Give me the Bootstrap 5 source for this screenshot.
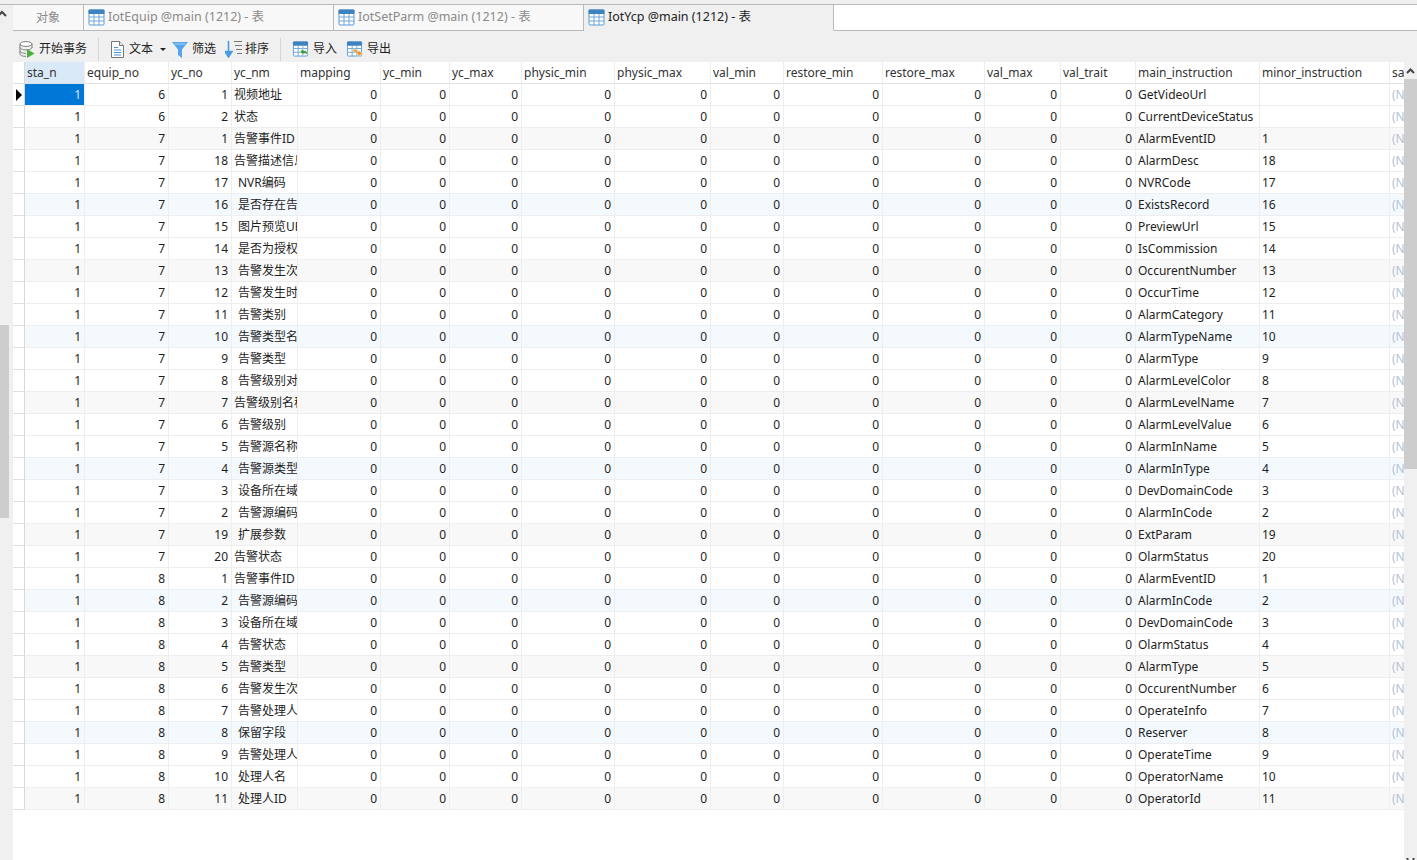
<!DOCTYPE html>
<html lang="zh">
<head>
  <meta charset="UTF-8">
  <meta name="viewport" content="width=device-width, initial-scale=1.0">
  <title>IotYcp @main (1212) - 表</title>
  <link href="https://cdn.jsdelivr.net/npm/bootstrap@5.3.0/dist/css/bootstrap.min.css" rel="stylesheet">
  <style>
    html, body {
      height: 100%;
      background: #f0f0f0;
      overflow: hidden;
    }
    body {
      font-family: "Noto Sans", "Noto Sans CJK SC", sans-serif;
      font-size: 12px;
      color: #1e1e1e;
    }
    .app-shell {
      height: 856px;
      margin-top: 4px;
      border-top: 1px solid #b9b9b9;
    }
    .main-col {
      min-width: 0;
    }
    .side-strip {
      width: 13px;
      flex: none;
    }
    .side-strip .chev {
      display: block;
      margin: 5px 0 0 -3px;
    }
    .side-thumb {
      width: 9px;
      height: 193px;
      margin-top: 308px;
      background: #cdcdcd;
    }
    .tab-row {
      height: 26px;
      flex: none;
    }
    .obj-tab, .file-tab {
      height: 26px;
      border-right: 1px solid #b9b9b9;
      border-bottom: 1px solid #b9b9b9;
      background: #f8f8f8;
      color: #8a8a8a;
    }
    .obj-tab {
      width: 71px;
      justify-content: center;
    }
    .file-tab {
      width: 250px;
      padding-left: 4px;
      gap: 3px;
      font-size: 12.5px;
    }
    .file-tab.on {
      background: #f0f0f0;
      border-bottom-color: #f0f0f0;
      color: #222;
    }
    .tab-rest {
      background: #fff;
      border-bottom: 1px solid #b9b9b9;
    }
    .tool-row {
      height: 31px;
      flex: none;
      padding: 5px 0 0 6px;
    }
    .tool-btn {
      padding: 0;
      border: 0;
      border-radius: 0;
      font-size: 12px;
      color: #1e1e1e;
      gap: 4px;
    }
    .tool-btn.tight {
      gap: 3px;
    }
    .tool-sep {
      width: 1px;
      height: 23px;
      background: #d6d6d6;
      margin: 0 11px;
    }
    .drop-arrow {
      width: 0;
      height: 0;
      margin: 0 6px 0 7px;
      border-left: 3px solid transparent;
      border-right: 3px solid transparent;
      border-top: 3px solid #222;
    }
    .gap-after {
      margin-right: 9px;
    }
    .grid-wrap {
      min-height: 0;
    }
    .grid-view {
      background: #fff;
      overflow: hidden;
      min-width: 0;
    }
    table.data-grid {
      width: 1411px;
      table-layout: fixed;
      border-collapse: separate;
      border-spacing: 0;
      margin: 0;
    }
    table.data-grid th, table.data-grid td {
      height: 22px;
      padding: 0 3px 0 2px;
      border-right: 1px solid #eeeeee;
      border-bottom: 1px solid #eeeeee;
      font-weight: 400;
      white-space: nowrap;
      overflow: hidden;
      line-height: 20px;
      background: transparent;
      color: #1e1e1e;
    }
    table.data-grid th {
      border-bottom-color: #e2e2e2;
      color: #333;
    }
    table.data-grid th.sel-head {
      background: #d9e9f7;
    }
    table.data-grid .mark-cell {
      padding: 0 0 0 3px;
      border-right: 1px solid #d8d8d8;
      border-bottom-color: #e0e0e0;
      background: #fff;
    }
    table.data-grid .num-cell {
      text-align: right;
    }
    table.data-grid .pad-cell {
      padding-left: 6px;
    }
    table.data-grid .null-cell {
      color: #b6c2d6;
    }
    table.data-grid tr.band-gray td {
      background: #f8f8f8;
    }
    table.data-grid tr.band-blue td {
      background: #f4f9fe;
    }
    table.data-grid tr td.mark-cell {
      background: #fff;
    }
    table.data-grid td.sel-cell {
      background: #0078d7;
      color: #d6e8f8;
    }
    .row-arrow {
      display: block;
      width: 0;
      height: 0;
      border-top: 6px solid transparent;
      border-bottom: 6px solid transparent;
      border-left: 6px solid #000;
    }
    .scroll-strip {
      width: 13px;
      flex: none;
    }
    .scroll-strip .chev {
      display: block;
      margin: 6px 0 0 2px;
    }
    .scroll-strip .chev-end {
      display: block;
      margin: auto 0 0 2px;
    }
    .scroll-thumb {
      height: 390px;
      margin-top: 5px;
      background: #cdcdcd;
    }
  </style>
</head>
<body>
  <div class="app-shell d-flex">
    <div class="side-strip">
      <svg class="chev" width="10" height="7" viewBox="0 0 10 7"><path d="M1 6 5 2l4 4" fill="none" stroke="#444" stroke-width="2"/></svg>
      <div class="side-thumb"></div>
    </div>

    <div class="main-col flex-grow-1 d-flex flex-column">
      <div class="tab-row d-flex">
        <div class="obj-tab d-flex align-items-center">对象</div>
        <div class="file-tab d-flex align-items-center"><svg width="17" height="17" viewBox="0 0 17 17"><use href="#ico-table"/></svg>IotEquip @main (1212) - 表</div>
        <div class="file-tab d-flex align-items-center"><svg width="17" height="17" viewBox="0 0 17 17"><use href="#ico-table"/></svg>IotSetParm @main (1212) - 表</div>
        <div class="file-tab on d-flex align-items-center"><svg width="17" height="17" viewBox="0 0 17 17"><use href="#ico-table"/></svg>IotYcp @main (1212) - 表</div>
        <div class="tab-rest flex-grow-1"></div>
      </div>

      <div class="tool-row d-flex align-items-center">
        <button class="btn tool-btn d-flex align-items-center">
          <svg width="16" height="17" viewBox="0 0 16 17">
            <ellipse cx="7" cy="3" rx="6" ry="2.400" fill="#fff" stroke="#7d7d7d"/>
            <path d="M1 3v10c0 1.400 2.700 2.400 6 2.400M13 3v4M1 6.500c0 1.400 2.700 2.400 6 2.400s6-1 6-2.400M1 10c0 1.400 2.700 2.400 6 2.400" fill="none" stroke="#7d7d7d"/>
            <path d="M8 8l7.500 4.500L8 17z" fill="#4caf3c"/>
          </svg>
          开始事务
        </button>
        <span class="tool-sep"></span>
        <button class="btn tool-btn d-flex align-items-center">
          <svg width="15" height="17" viewBox="0 0 15 17">
            <path d="M1.500.5h8l4 4v12h-12z" fill="#fff" stroke="#777"/>
            <path d="M9.500.5v4h4" fill="#eee" stroke="#777"/>
            <path d="M4 6.500h4M4 9h7M4 11.500h7M4 14h7" stroke="#3f92dc"/>
          </svg>
          文本
        </button>
        <span class="drop-arrow"></span>
        <button class="btn tool-btn d-flex align-items-center gap-after">
          <svg width="16" height="17" viewBox="0 0 16 17">
            <path d="M0 1h16l-6 7.500V17l-4-3V8.500z" fill="#56a5e8"/>
            <path d="M3 3h10" stroke="#a9d3f5"/>
          </svg>
          筛选
        </button>
        <button class="btn tool-btn tight d-flex align-items-center">
          <svg width="17" height="18" viewBox="0 0 17 18">
            <path d="M3.500 1v12M0 11.500l3.500 5.500 3.500-5.500z" fill="#4a9be0" stroke="#4a9be0" stroke-width="1.600"/>
            <path d="M9 1.500h8M10 5.500h7M11 9.500h6M12 13.500h5" stroke="#777"/>
          </svg>
          排序
        </button>
        <span class="tool-sep"></span>
        <button class="btn tool-btn d-flex align-items-center gap-after">
          <svg width="17" height="16" viewBox="0 0 17 16">
            <use href="#ico-table"/>
            <path d="M8 10.500l3.500-3v2c3 0 4.500 1.500 5 5-1-1.500-2.500-2-5-2v2z" fill="#3f9a45" stroke="#fff" stroke-width=".5"/>
          </svg>
          导入
        </button>
        <button class="btn tool-btn d-flex align-items-center">
          <svg width="17" height="16" viewBox="0 0 17 16">
            <use href="#ico-table"/>
            <path d="M7 8c3 0 4.500 1 5 3V9l4.500 3.500L12 16v-2.500c-1.500-2-3-3-5-3z" fill="#ec9420" stroke="#fff" stroke-width=".5"/>
          </svg>
          导出
        </button>
      </div>

      <div class="grid-wrap flex-grow-1 d-flex">
        <div class="grid-view flex-grow-1">
          <table class="data-grid" id="grid">
            <colgroup id="gridCols"></colgroup>
            <thead><tr id="gridHead"></tr></thead>
            <tbody id="gridBody"></tbody>
          </table>
        </div>
        <div class="scroll-strip d-flex flex-column">
          <svg class="chev" width="9" height="6" viewBox="0 0 9 6"><path d="M1 5 4.500 1.500 8 5" fill="none" stroke="#444" stroke-width="2"/></svg>
          <div class="scroll-thumb"></div>
          <svg class="chev-end" width="9" height="2" viewBox="0 0 9 2"><path d="M1 0l1 2M8 0 7 2" fill="none" stroke="#444" stroke-width="2"/></svg>
        </div>
      </div>
    </div>
  </div>

  <svg width="0" height="0" class="d-block">
    <symbol id="ico-table" viewBox="0 0 17 17">
      <rect x="1" y="1" width="15" height="15" rx="1" fill="#fff" stroke="#5b9bd5"/>
      <rect x=".5" y=".5" width="16" height="4.500" rx="1" fill="#3f82c0"/>
      <path d="M1 8h15M1 12h15M6 5v11M11 5v11" stroke="#6ea6da"/>
    </symbol>
  </svg>

  <script>
    const cols = [
      ['', 12], ['sta_n', 60], ['equip_no', 84], ['yc_no', 63], ['yc_nm', 66], ['mapping', 83],
      ['yc_min', 69], ['yc_max', 72], ['physic_min', 93], ['physic_max', 96], ['val_min', 73],
      ['restore_min', 99], ['restore_max', 102], ['val_max', 76], ['val_trait', 75],
      ['main_instruction', 124], ['minor_instruction', 130], ['sample_rate', 34]
    ];
    // equip_no, yc_no, yc_nm (leading space = indented in the db), main, minor
    const rows = [
      [6, 1, '视频地址', 'GetVideoUrl', ''],
      [6, 2, '状态', 'CurrentDeviceStatus', ''],
      [7, 1, '告警事件ID', 'AlarmEventID', 1],
      [7, 18, '告警描述信息', 'AlarmDesc', 18],
      [7, 17, ' NVR编码', 'NVRCode', 17],
      [7, 16, ' 是否存在告警录像', 'ExistsRecord', 16],
      [7, 15, ' 图片预览URL', 'PreviewUrl', 15],
      [7, 14, ' 是否为授权', 'IsCommission', 14],
      [7, 13, ' 告警发生次数', 'OccurentNumber', 13],
      [7, 12, ' 告警发生时间', 'OccurTime', 12],
      [7, 11, ' 告警类别', 'AlarmCategory', 11],
      [7, 10, ' 告警类型名称', 'AlarmTypeName', 10],
      [7, 9, ' 告警类型', 'AlarmType', 9],
      [7, 8, ' 告警级别对应颜色', 'AlarmLevelColor', 8],
      [7, 7, '告警级别名称', 'AlarmLevelName', 7],
      [7, 6, ' 告警级别', 'AlarmLevelValue', 6],
      [7, 5, ' 告警源名称', 'AlarmInName', 5],
      [7, 4, ' 告警源类型', 'AlarmInType', 4],
      [7, 3, ' 设备所在域', 'DevDomainCode', 3],
      [7, 2, ' 告警源编码', 'AlarmInCode', 2],
      [7, 19, ' 扩展参数', 'ExtParam', 19],
      [7, 20, '告警状态', 'OlarmStatus', 20],
      [8, 1, '告警事件ID', 'AlarmEventID', 1],
      [8, 2, ' 告警源编码', 'AlarmInCode', 2],
      [8, 3, ' 设备所在域', 'DevDomainCode', 3],
      [8, 4, ' 告警状态', 'OlarmStatus', 4],
      [8, 5, ' 告警类型', 'AlarmType', 5],
      [8, 6, ' 告警发生次数', 'OccurentNumber', 6],
      [8, 7, ' 告警处理人信息', 'OperateInfo', 7],
      [8, 8, ' 保留字段', 'Reserver', 8],
      [8, 9, ' 告警处理人时间', 'OperateTime', 9],
      [8, 10, ' 处理人名', 'OperatorName', 10],
      [8, 11, ' 处理人ID', 'OperatorId', 11]
    ];

    document.getElementById('gridCols').innerHTML = cols.map(c => `<col style="width:${c[1]}px">`).join('');
    document.getElementById('gridHead').innerHTML = cols.map((c, i) =>
      `<th class="${i === 0 ? 'mark-cell' : ''}${i === 1 ? 'sel-head' : ''}">${c[0]}</th>`).join('');

    const zero = n => '<td class="num-cell">0</td>'.repeat(n);
    document.getElementById('gridBody').innerHTML = rows.map((r, i) => {
      const n = i + 1;
      const band = n % 6 === 0 ? 'band-blue' : n % 3 === 0 ? 'band-gray' : '';
      const name = String(r[2]);
      return `<tr class="${band}">` +
        `<td class="mark-cell">${i === 0 ? '<span class="row-arrow"></span>' : ''}</td>` +
        `<td class="num-cell${i === 0 ? ' sel-cell' : ''}">1</td>` +
        `<td class="num-cell">${r[0]}</td><td class="num-cell">${r[1]}</td>` +
        `<td class="${name[0] === ' ' ? 'pad-cell' : ''}">${name.trim()}</td>` +
        zero(10) +
        `<td>${r[3]}</td><td>${r[4]}</td><td class="null-cell">(Null)</td></tr>`;
    }).join('');
  </script>
  <script src="https://cdn.jsdelivr.net/npm/bootstrap@5.3.0/dist/js/bootstrap.bundle.min.js"></script>
</body>
</html>
